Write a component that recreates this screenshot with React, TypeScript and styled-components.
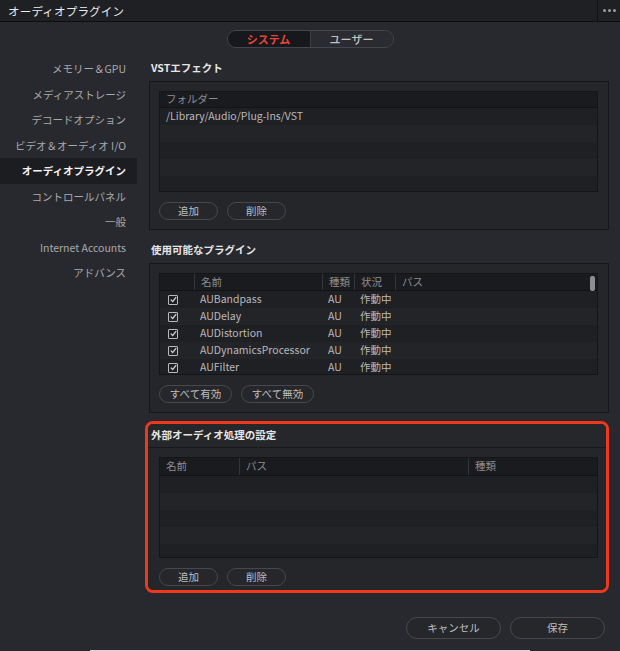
import React from "react";
import styled, { createGlobalStyle } from "styled-components";

const GlobalStyle = createGlobalStyle`
  html, body {
    margin: 0;
    padding: 0;
    background: #28292e;
  }
  body {
    font-family: "Noto Sans CJK JP", "Noto Sans", sans-serif;
    -webkit-font-smoothing: antialiased;
  }
  * {
    box-sizing: border-box;
  }
`;

const Window = styled.div`
  width: 620px;
  height: 651px;
  background: #28292e;
  display: flex;
  flex-direction: column;
  overflow: hidden;
`;

const TitleBar = styled.div`
  height: 22px;
  display: flex;
  align-items: center;
  background: #1f2024;
  border-bottom: 1px solid #0e0e10;
  flex-shrink: 0;
`;

const TitleText = styled.div`
  flex: 1;
  padding-left: 8px;
  font-size: 11.5px;
  color: #ececec;
  letter-spacing: 0.2px;
`;

const MenuDots = styled.div`
  width: 23px;
  height: 100%;
  border-left: 1px solid #111214;
  display: flex;
  align-items: center;
  justify-content: center;
  gap: 2px;

  span {
    width: 3px;
    height: 3px;
    border-radius: 50%;
    background: #9a9ba0;
  }
`;

const TabRow = styled.div`
  height: 34px;
  display: flex;
  justify-content: center;
  padding-top: 8px;
  flex-shrink: 0;
`;

const Segmented = styled.div`
  display: flex;
  height: 18px;
  border: 1px solid #45464c;
  border-radius: 10px;
  overflow: hidden;
`;

const Segment = styled.div<{ $active?: boolean }>`
  width: ${(p) => (p.$active ? 83 : 82)}px;
  display: flex;
  align-items: center;
  justify-content: center;
  font-size: 11px;
  line-height: 1;
  font-weight: ${(p) => (p.$active ? 700 : 500)};
  color: ${(p) => (p.$active ? "#e8453c" : "#c2c2c2")};
  background: ${(p) => (p.$active ? "#17181b" : "#2b2c31")};
  border-right: ${(p) => (p.$active ? "1px solid #3e3f44" : "none")};
`;

const Body = styled.div`
  display: grid;
  grid-template-columns: 137px 1fr;
  flex-shrink: 0;
`;

const Sidebar = styled.div`
  display: flex;
  flex-direction: column;
`;

const SideItem = styled.div<{ $active?: boolean }>`
  height: 25.5px;
  display: flex;
  align-items: center;
  justify-content: flex-end;
  padding-right: 11px;
  font-size: 10.5px;
  color: ${(p) => (p.$active ? "#f4f4f4" : "#a9a9ad")};
  font-weight: ${(p) => (p.$active ? 700 : 400)};
  background: ${(p) => (p.$active ? "#1c1d21" : "transparent")};
`;

const Content = styled.div`
  display: flex;
  flex-direction: column;
  padding: 0 11px 0 12px;
`;

const SectionTitle = styled.div<{ $top?: number }>`
  height: 25px;
  margin-top: ${(p) => p.$top ?? 0}px;
  display: flex;
  align-items: center;
  padding-left: 2px;
  font-size: 10.5px;
  line-height: 1;
  font-weight: 700;
  color: #e6e6e6;
`;

const Panel = styled.div<{ $pad?: string }>`
  background: #25262a;
  border: 1px solid #161719;
  padding: ${(p) => p.$pad ?? "9px 10px 9px 9px"};
  display: flex;
  flex-direction: column;
  gap: 10px;
`;

const Highlight = styled.div`
  margin: 8px 0 0 -4px;
  border: 3px solid #f0391c;
  border-radius: 8px;
  overflow: hidden;
  display: flex;
  flex-direction: column;

  ${SectionTitle} {
    height: 24px;
    padding-left: 3px;
    background: #26272b;
    border-bottom: 1px solid #18191c;
  }

  ${Panel} {
    border: none;
  }
`;

const Table = styled.div<{ $height: number }>`
  position: relative;
  height: ${(p) => p.$height}px;
  background: #1f2024;
  border: 1px solid #141517;
  overflow: hidden;
`;

const Row = styled.div<{ $cols: string; $header?: boolean; $h?: number }>`
  display: grid;
  grid-template-columns: ${(p) => p.$cols};
  height: ${(p) => p.$h ?? 17}px;
  align-items: center;
  font-size: 10.5px;
  line-height: 1;
  color: ${(p) => (p.$header ? "#8d8e92" : "#b9b9bc")};
  background: ${(p) => (p.$header ? "#1a1b1e" : "transparent")};
  border-bottom: ${(p) => (p.$header ? "1px solid #121315" : "none")};

  &:nth-child(odd) {
    background: ${(p) => (p.$header ? "#1a1b1e" : "#232428")};
  }
`;

const Cell = styled.div<{ $sep?: boolean }>`
  height: 100%;
  display: flex;
  align-items: center;
  padding-left: 6px;
  white-space: nowrap;
  overflow: hidden;
  border-left: ${(p) => (p.$sep ? "1px solid #34353a" : "none")};
`;

const CheckBox = styled.div`
  width: 10px;
  height: 10px;
  border: 1px solid #b9b9bc;
  border-radius: 1px;
  margin-left: 2px;
  display: flex;
  align-items: center;
  justify-content: center;
`;

const ScrollThumb = styled.div`
  position: absolute;
  right: 2px;
  top: 2px;
  width: 5px;
  height: 15px;
  border-radius: 2px;
  background: #8b8d92;
`;

const ButtonRow = styled.div`
  display: flex;
  gap: 9px;
`;

const Btn = styled.button<{ $w?: number; $h?: number }>`
  width: ${(p) => p.$w ?? 59}px;
  height: ${(p) => p.$h ?? 18}px;
  border: 1px solid #47484d;
  border-radius: ${(p) => ((p.$h ?? 18) / 2 + 1)}px;
  background: #26272b;
  color: #bdbdc0;
  font-family: inherit;
  font-size: 10.5px;
  line-height: 1;
  padding: 0;
  white-space: nowrap;
  display: flex;
  align-items: center;
  justify-content: center;
`;

const Footer = styled.div`
  display: flex;
  justify-content: flex-end;
  gap: 9px;
  padding: 24px 15px 0 0;
`;

const BottomStrip = styled.div`
  margin: 11px 0 0 90px;
  width: 440px;
  height: 2px;
  background: #d8d8d8;
`;

const Check = () => (
  <CheckBox>
    <svg width="7" height="7" viewBox="0 0 7 7">
      <path d="M0.8 3.6 L2.7 5.5 L6.2 1.2" stroke="#d0d0d2" strokeWidth="1.3" fill="none" />
    </svg>
  </CheckBox>
);

const sideItems = [
  "メモリー＆GPU",
  "メディアストレージ",
  "デコードオプション",
  "ビデオ＆オーディオ I/O",
  "オーディオプラグイン",
  "コントロールパネル",
  "一般",
  "Internet Accounts",
  "アドバンス",
];

const plugins = ["AUBandpass", "AUDelay", "AUDistortion", "AUDynamicsProcessor", "AUFilter"];

const pluginCols = "34px 128px 32px 41px 1fr";
const extCols = "79px 229px 1fr";

export default function App() {
  return (
    <Window>
      <GlobalStyle />
      <TitleBar>
        <TitleText>オーディオプラグイン</TitleText>
        <MenuDots>
          <span />
          <span />
          <span />
        </MenuDots>
      </TitleBar>
      <TabRow>
        <Segmented>
          <Segment $active>システム</Segment>
          <Segment>ユーザー</Segment>
        </Segmented>
      </TabRow>
      <Body>
        <Sidebar>
          {sideItems.map((s) => (
            <SideItem key={s} $active={s === "オーディオプラグイン"}>
              {s}
            </SideItem>
          ))}
        </Sidebar>
        <Content>
          <SectionTitle>VSTエフェクト</SectionTitle>
          <Panel>
            <Table $height={101}>
              <Row $cols="1fr" $header $h={16}>
                <Cell>フォルダー</Cell>
              </Row>
              {["/Library/Audio/Plug-Ins/VST", "", "", "", ""].map((t, i) => (
                <Row key={i} $cols="1fr">
                  <Cell>{t}</Cell>
                </Row>
              ))}
            </Table>
            <ButtonRow>
              <Btn>追加</Btn>
              <Btn>削除</Btn>
            </ButtonRow>
          </Panel>

          <SectionTitle $top={8}>使用可能なプラグイン</SectionTitle>
          <Panel>
            <Table $height={102}>
              <Row $cols={pluginCols} $header>
                <Cell />
                <Cell $sep>名前</Cell>
                <Cell $sep>種類</Cell>
                <Cell $sep>状況</Cell>
                <Cell $sep>パス</Cell>
              </Row>
              {plugins.map((p) => (
                <Row key={p} $cols={pluginCols}>
                  <Cell>
                    <Check />
                  </Cell>
                  <Cell>{p}</Cell>
                  <Cell>AU</Cell>
                  <Cell>作動中</Cell>
                  <Cell />
                </Row>
              ))}
              <ScrollThumb />
            </Table>
            <ButtonRow>
              <Btn $w={73}>すべて有効</Btn>
              <Btn $w={73}>すべて無効</Btn>
            </ButtonRow>
          </Panel>

          <Highlight>
            <SectionTitle>外部オーディオ処理の設定</SectionTitle>
            <Panel $pad="9px 8px 4px 11px">
              <Table $height={101}>
                <Row $cols={extCols} $header $h={18}>
                  <Cell>名前</Cell>
                  <Cell $sep>パス</Cell>
                  <Cell $sep>種類</Cell>
                </Row>
                {[0, 1, 2, 3, 4].map((i) => (
                  <Row key={i} $cols={extCols}>
                    <Cell />
                    <Cell />
                    <Cell />
                  </Row>
                ))}
              </Table>
              <ButtonRow>
                <Btn>追加</Btn>
                <Btn>削除</Btn>
              </ButtonRow>
            </Panel>
          </Highlight>
        </Content>
      </Body>
      <Footer>
        <Btn $w={95} $h={22}>キャンセル</Btn>
        <Btn $w={95} $h={22}>保存</Btn>
      </Footer>
      <BottomStrip />
    </Window>
  );
}
